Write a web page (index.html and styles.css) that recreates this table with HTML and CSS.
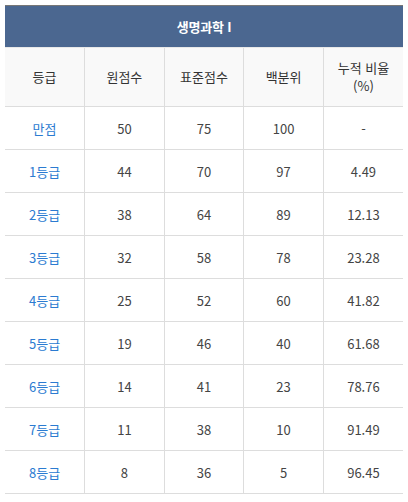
FILE: index.html
```html
<!DOCTYPE html>
<html lang="ko">
<head>
<meta charset="utf-8">
<link rel="stylesheet" href="styles.css">
</head>
<body>
<table class="score">
  <thead>
    <tr class="title-row"><th colspan="5" class="title">생명과학 I</th></tr>
    <tr class="head-row">
      <th>등급</th><th>원점수</th><th>표준점수</th><th>백분위</th><th>누적 비율<br>(%)</th>
    </tr>
  </thead>
  <tbody>
    <tr><td class="grade">만점</td><td>50</td><td>75</td><td>100</td><td>-</td></tr>
    <tr><td class="grade">1등급</td><td>44</td><td>70</td><td>97</td><td>4.49</td></tr>
    <tr><td class="grade">2등급</td><td>38</td><td>64</td><td>89</td><td>12.13</td></tr>
    <tr><td class="grade">3등급</td><td>32</td><td>58</td><td>78</td><td>23.28</td></tr>
    <tr><td class="grade">4등급</td><td>25</td><td>52</td><td>60</td><td>41.82</td></tr>
    <tr><td class="grade">5등급</td><td>19</td><td>46</td><td>40</td><td>61.68</td></tr>
    <tr><td class="grade">6등급</td><td>14</td><td>41</td><td>23</td><td>78.76</td></tr>
    <tr><td class="grade">7등급</td><td>11</td><td>38</td><td>10</td><td>91.49</td></tr>
    <tr><td class="grade">8등급</td><td>8</td><td>36</td><td>5</td><td>96.45</td></tr>
  </tbody>
</table>
</body>
</html>
```
FILE: styles.css
```css
html, body {
  margin: 0;
  padding: 0;
  background: #fff;
}
body {
  padding: 5px 0 0 5px;
  font-family: "Noto Sans CJK KR", "Noto Sans", sans-serif;
  font-size: 13px;
  color: #444;
}
.score {
  width: 398px;
  border-collapse: collapse;
  table-layout: fixed;
}
.score th, .score td {
  padding: 0;
  text-align: center;
  vertical-align: middle;
  border-right: 1px solid #dddddd;
  border-bottom: 1px solid #dddddd;
  font-weight: normal;
}
.score th:last-child, .score td:last-child {
  border-right: none;
}
.title-row th.title {
  background: #4b6790;
  color: #fff;
  font-weight: bold;
  height: 41px;
  border-top: 1px solid #777;
  border-bottom: 1px solid #e8e8e8;
  letter-spacing: -0.2px;
}
.head-row th {
  background: #f9f9f9;
  color: #333;
  height: 58px;
  line-height: 18px;
  font-size: 13px;
}
.score td {
  height: 42px;
  color: #444;
}
.score td.grade {
  color: #2b7bd1;
}
```
